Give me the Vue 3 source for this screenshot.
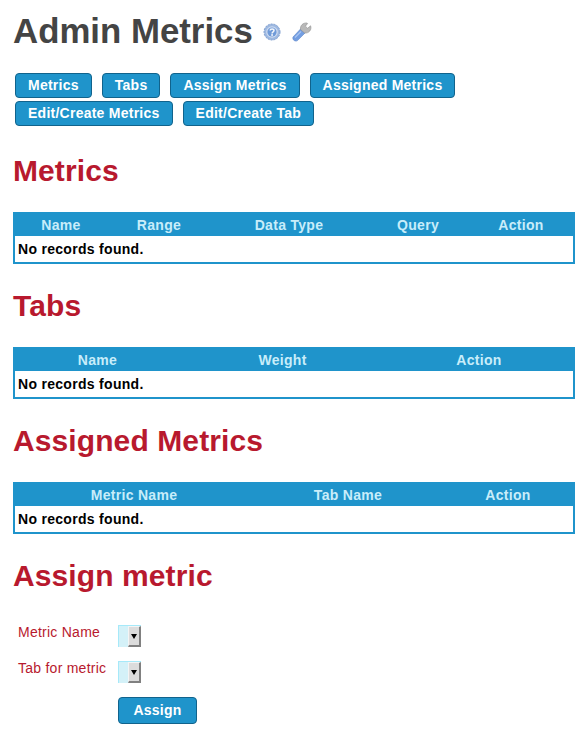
<template>
  <div class="page">
    <div class="title-row">
      <h1>Admin Metrics</h1>
      <svg class="ico help" width="18" height="18" viewBox="0 0 18 18">
        <circle cx="9" cy="9" r="8" fill="#9db8e0" />
        <circle cx="9" cy="9" r="8" fill="none" stroke="#7f9fd0" stroke-width="1" stroke-dasharray="2 1" />
        <circle cx="9" cy="9" r="5.8" fill="#cfdcf0" />
        <circle cx="9" cy="9" r="4.6" fill="#6f9ad8" />
        <path d="M7.1 7.5 C7.2 5.5 11 5.5 11 7.6 C11 8.9 9.1 8.9 9.1 10.4" fill="none" stroke="#f2f6fc" stroke-width="1.5" />
        <rect x="8.2" y="11.2" width="1.8" height="1.6" fill="#f2f6fc" />
      </svg>
      <svg class="ico wrench" width="20" height="20" viewBox="0 0 20 20">
        <path d="M1 15 L8.5 7 L13 11 L5.5 18.6 C3.5 20 0 18 1 15 Z" fill="#739ee2" stroke="#5c84c8" stroke-width="0.6" />
        <path d="M3 15.5 L9 9.5" stroke="#a9c5f0" stroke-width="1.2" fill="none" />
        <path d="M8.5 7.5 C8 3.5 11 0.6 15 1 L15.6 1.5 L13.4 4.2 L15.6 6.2 L18.6 3.8 C20 7.5 17 11.6 12.6 11 Z" fill="#b9b9b9" stroke="#8e8e8e" stroke-width="0.6" />
      </svg>
    </div>

    <div class="nav">
      <a v-for="b in buttons" :key="b" class="btn">{{ b }}</a>
    </div>

    <template v-for="t in tables" :key="t.title">
      <h2>{{ t.title }}</h2>
      <table class="grid">
        <colgroup>
          <col v-for="c in t.cols" :key="c.name" :style="{ width: c.width + 'px' }" />
        </colgroup>
        <thead>
          <tr><th v-for="c in t.cols" :key="c.name">{{ c.name }}</th></tr>
        </thead>
        <tbody>
          <tr><td :colspan="t.cols.length">No records found.</td></tr>
        </tbody>
      </table>
    </template>

    <h2>Assign metric</h2>
    <div class="form">
      <div class="form-row">
        <label>Metric Name</label>
        <div class="fake-select"><span class="arrow-btn"><i></i></span></div>
      </div>
      <div class="form-row">
        <label>Tab for metric</label>
        <div class="fake-select"><span class="arrow-btn"><i></i></span></div>
      </div>
      <a class="btn assign">Assign</a>
    </div>
  </div>
</template>

<script setup>
const buttons = ['Metrics', 'Tabs', 'Assign Metrics', 'Assigned Metrics', 'Edit/Create Metrics', 'Edit/Create Tab']

const tables = [
  {
    title: 'Metrics',
    cols: [
      { name: 'Name', width: 92 },
      { name: 'Range', width: 104 },
      { name: 'Data Type', width: 156 },
      { name: 'Query', width: 102 },
      { name: 'Action', width: 104 }
    ]
  },
  {
    title: 'Tabs',
    cols: [
      { name: 'Name', width: 165 },
      { name: 'Weight', width: 205 },
      { name: 'Action', width: 188 }
    ]
  },
  {
    title: 'Assigned Metrics',
    cols: [
      { name: 'Metric Name', width: 238 },
      { name: 'Tab Name', width: 190 },
      { name: 'Action', width: 130 }
    ]
  }
]
</script>

<style>
html, body { background: #fff; }
</style>

<style scoped>
.page {
  width: 587px;
  height: 735px;
  overflow: hidden;
  box-sizing: border-box;
  padding: 10px 12px 0 13px;
  font-family: "Liberation Sans", Arial, sans-serif;
  font-size: 14px;
}

.title-row { display: flex; align-items: center; height: 42px; }

h1 {
  margin: 0;
  font-size: 34.8px;
  font-weight: bold;
  color: #444;
}

.ico { display: block; flex: none; }
.help { margin-left: 10px; margin-top: 2px; }
.wrench { margin-left: 11px; margin-top: 2px; }

.nav {
  display: flex;
  flex-wrap: wrap;
  gap: 3px 10px;
  padding-left: 2px;
  margin-top: 21px;
  margin-bottom: 26px;
  width: 470px;
}

.btn {
  display: block;
  box-sizing: border-box;
  height: 25px;
  line-height: 23px;
  padding: 0 12px;
  background: #1f94cb;
  border: 1px solid #11638c;
  border-radius: 4px;
  color: #fff;
  font-weight: bold;
  font-size: 14px;
  letter-spacing: 0.25px;
}

h2 {
  margin: 23px 0 22px;
  font-size: 30px;
  line-height: 38px;
  font-weight: bold;
  letter-spacing: 0.1px;
  color: #b8192e;
}

.nav + h2 { margin-top: 0; }

.grid {
  width: 562px;
  border-collapse: separate;
  border-spacing: 0;
  table-layout: fixed;
  border: 2px solid #1f94cb;
  border-top: 0;
}

.grid th {
  height: 24px;
  padding: 1px 0 0;
  box-sizing: border-box;
  background: #1f94cb;
  color: #c8edfa;
  font-size: 14px;
  font-weight: bold;
  letter-spacing: 0.3px;
  text-align: center;
}

.grid td {
  height: 26px;
  padding: 0 3px;
  color: #000;
  font-weight: bold;
  font-size: 14px;
  letter-spacing: 0.3px;
}

.form { padding-top: 5px; }

.form-row {
  display: flex;
  align-items: flex-start;
  height: 36px;
}

label {
  box-sizing: border-box;
  width: 105px;
  padding: 2px 0 0 5px;
  font-size: 14px;
  line-height: 16px;
  letter-spacing: 0.25px;
  color: #b8192e;
}

.fake-select {
  box-sizing: border-box;
  width: 23px;
  height: 22px;
  margin-top: 3px;
  display: flex;
  justify-content: flex-end;
  background: #d4f1f8;
  border-top: 1px solid #a6e9f9;
  border-left: 1px solid #a6e9f9;
}

.arrow-btn {
  box-sizing: border-box;
  width: 13px;
  height: 21px;
  background: #dcdcdc;
  border-top: 1px solid #f4f4f4;
  border-left: 1px solid #f4f4f4;
  border-right: 2px solid #808080;
  border-bottom: 2px solid #808080;
  display: flex;
  align-items: center;
  justify-content: center;
}

.arrow-btn i {
  display: block;
  width: 0;
  height: 0;
  border-left: 3.5px solid transparent;
  border-right: 3.5px solid transparent;
  border-top: 5px solid #000;
}

.assign {
  width: 79px;
  height: 27px;
  line-height: 25px;
  margin: 3px 0 0 105px;
  padding: 0;
  text-align: center;
}
</style>
